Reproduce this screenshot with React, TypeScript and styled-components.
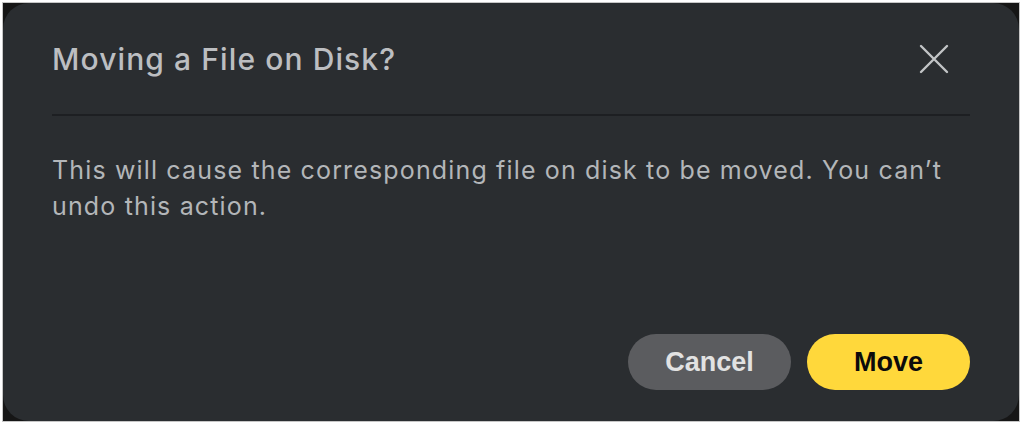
import React from 'react';
import styled, { createGlobalStyle } from 'styled-components';

const GlobalStyle = createGlobalStyle`
  html, body {
    margin: 0;
    padding: 0;
    background: #ffffff;
  }
  * {
    box-sizing: border-box;
  }
`;

const Frame = styled.div`
  margin: 2px 0 0 2px;
  width: 1018px;
  height: 420px;
  border: 1px solid #c6c6c6;
  background: #161616;
`;

const Dialog = styled.div`
  height: 100%;
  display: flex;
  flex-direction: column;
  padding: 0 49px 31px 49px;
  background: #2a2d30;
  border-radius: 26px;
  font-family: Inter, 'Noto Sans', sans-serif;
`;

const Header = styled.div`
  height: 113px;
  display: flex;
  align-items: center;
  justify-content: space-between;
  border-bottom: 2px solid #1d1f22;
`;

const Title = styled.h2`
  margin: 0;
  font-size: 30px;
  font-weight: 500;
  color: #bcbec1;
  letter-spacing: 1.1px;
`;

const CloseButton = styled.button`
  width: 30px;
  height: 30px;
  margin-right: 21px;
  padding: 0;
  border: none;
  background: transparent;
  display: flex;
  align-items: center;
  justify-content: center;
  cursor: pointer;
`;

const Message = styled.p`
  margin: 36px 0 0;
  font-size: 25px;
  line-height: 36px;
  letter-spacing: 1.15px;
  color: #b3b6b9;
  max-width: 910px;
`;

const Footer = styled.div`
  margin-top: auto;
  display: flex;
  justify-content: flex-end;
  gap: 16px;
`;

const ActionButton = styled.button<{ $primary?: boolean }>`
  width: 163px;
  height: 56px;
  border: none;
  border-radius: 28px;
  font-family: 'Liberation Sans', Arial, sans-serif;
  font-size: 27px;
  font-weight: 700;
  cursor: pointer;
  background: ${(p) => (p.$primary ? '#ffd83b' : '#5b5c5f')};
  color: ${(p) => (p.$primary ? '#0b0b0b' : '#e2e2e2')};
`;

const CloseIcon = () => (
  <svg width="30" height="30" viewBox="0 0 30 30" fill="none">
    <path
      d="M2 2L28 28M28 2L2 28"
      stroke="#c2c4c6"
      strokeWidth="2.4"
      strokeLinecap="round"
    />
  </svg>
);

const App = () => {
  return (
    <>
      <GlobalStyle />
      <Frame>
        <Dialog>
          <Header>
            <Title>Moving a File on Disk?</Title>
            <CloseButton aria-label="Close">
              <CloseIcon />
            </CloseButton>
          </Header>
          <Message>
            This will cause the corresponding file on disk to be moved. You can’t undo this
            action.
          </Message>
          <Footer>
            <ActionButton>Cancel</ActionButton>
            <ActionButton $primary>Move</ActionButton>
          </Footer>
        </Dialog>
      </Frame>
    </>
  );
};

export default App;
